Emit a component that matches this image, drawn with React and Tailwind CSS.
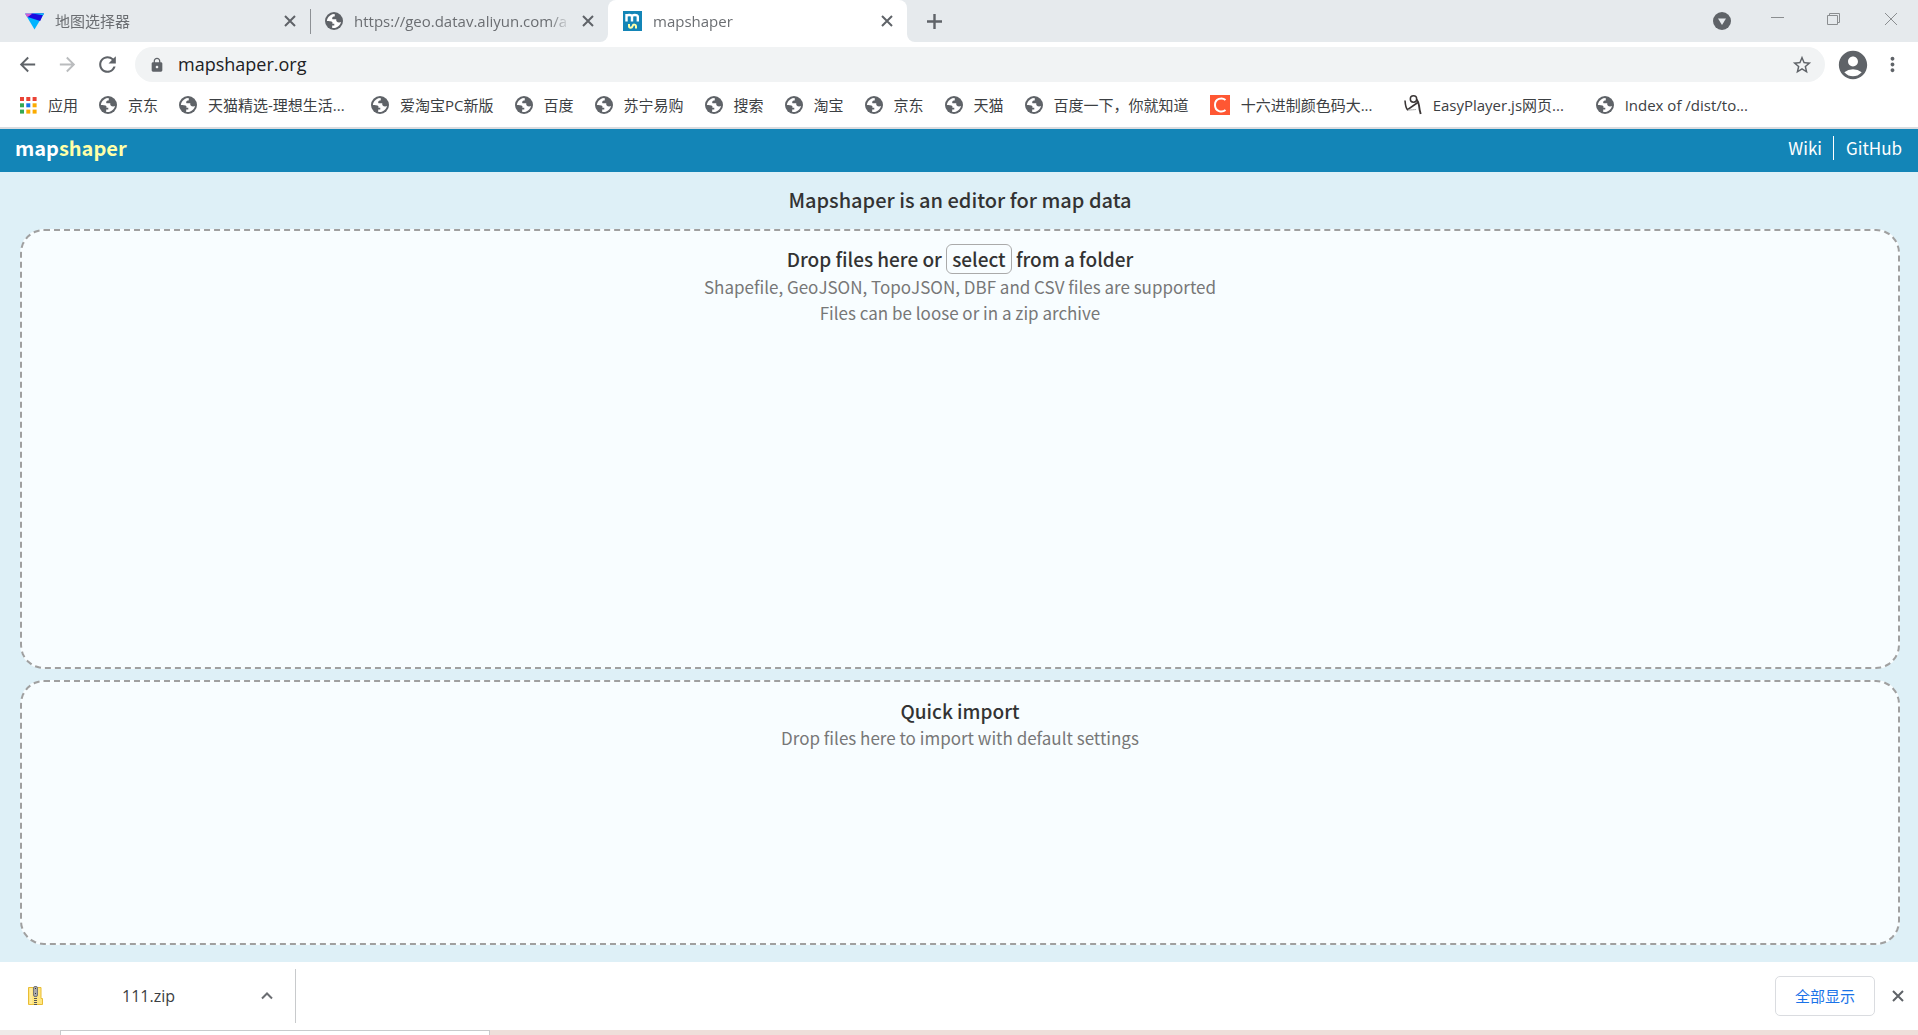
import React from 'react';
import { MdArrowBack, MdArrowForward, MdRefresh, MdLock, MdStarBorder, MdAccountCircle, MdMoreVert } from 'react-icons/md';

const ui = "font-['Open_Sans','Noto_Sans_CJK_SC',sans-serif]";
const web = "font-['Noto_Sans_CJK_SC',sans-serif]";

function Globe() {
  return (
    <svg viewBox="0 0 18 18" className="size-[18px] shrink-0" aria-hidden="true">
      <circle cx="9" cy="9" r="9" fill="#5f6368" />
      <path fill="#fff" d="M9.6 1.9C6.300 1.900 3.500 4 2.300 6.900c-.3.800-.4 1.500-.4 2.100 1.600-.2 3.200-.1 4.600.5 1 .4 1.300 1.400.8 2.300h2v1.700H7.200v2.400c1.200.3 2.400.3 3.600-.1 2.600-.8 4.600-3 5.200-5.700-1.500.6-3.400.5-4.300-.6-.5-.7-.6-1.600-.4-2.300H8.100C7.200 7.200 6.900 6.200 7.400 5.400c.4-.7 1.100-.8 1.800-.8.800 0 .7-1.500.4-2.700z" />
    </svg>
  );
}

function Cross() {
  return (
    <svg viewBox="0 0 18 18" className="size-[18px]" fill="none" stroke="currentColor" strokeWidth="2" aria-hidden="true">
      <path d="M4 4l10 10M14 4L4 14" />
    </svg>
  );
}

function Plus() {
  return (
    <svg viewBox="0 0 25 25" className="size-[25px]" fill="none" stroke="currentColor" strokeWidth="2.400" aria-hidden="true">
      <path d="M12.500 5v15M5 12.500h15" />
    </svg>
  );
}

function ChevronUp() {
  return (
    <svg viewBox="0 0 22 22" className="size-[22px]" fill="none" stroke="currentColor" strokeWidth="2" aria-hidden="true">
      <path d="M6 13.500l5-5 5 5" />
    </svg>
  );
}

function VeeLogo() {
  return (
    <svg viewBox="0 0 20 18" className="h-[18px] w-[19px] shrink-0" aria-hidden="true">
      <path d="M0 1h20L10 18z" fill="#00b4ff" />
      <path d="M2 4.500 16 9 19 2.500 20 1H7z" fill="#1a0ce0" />
      <path d="M0 1h8L2.500 5z" fill="#d35bd0" />
      <path d="M8 1h12l-1 2z" fill="#12c4f4" />
    </svg>
  );
}

function MapshaperLogo() {
  return (
    <svg viewBox="0 0 19 20" className="h-5 w-[19px] shrink-0" aria-hidden="true">
      <path d="M0 0h19v20H0z" fill="#1385b7" />
      <path d="M3.500 10.500V3M3.500 5.500c0-2 5.500-2 5.500 0v5M9 5.500c0-2 5.800-2 5.800 0v5" fill="none" stroke="#fff" strokeWidth="2.400" />
      <path d="M6 13v2c0 2.300 3 2.300 3.500.2s3.500-2.200 3.500.3v2" fill="none" stroke="#ffffa8" strokeWidth="2" />
    </svg>
  );
}

function Tab({ icon, title, active, width }) {
  return (
    <div className={`flex h-[42px] items-center ${width} ${active ? 'rounded-t-lg bg-white' : ''}`}>
      {icon}
      <span className="ml-[11px] mr-2 flex-1 overflow-hidden whitespace-nowrap text-[15px] leading-6 text-[#6b6e72] [mask-image:linear-gradient(to_right,black_90%,transparent)]">{title}</span>
      <button aria-label="Close tab" className="text-[#5f6368]"><Cross /></button>
    </div>
  );
}

const apps = ['#ea4335', '#ea4335', '#ea4335', '#34a853', '#1a73e8', '#fbab00', '#34a853', '#fbab00', '#fbab00'];

function AppsIcon() {
  return (
    <svg viewBox="0 0 17 17" className="size-[17px] shrink-0" aria-hidden="true">
      {apps.map((c, i) => <rect key={i} x={(i % 3) * 6.300} y={Math.floor(i / 3) * 6.300} width="4" height="4" fill={c} />)}
    </svg>
  );
}

function COrange() {
  return (
    <svg viewBox="0 0 20 20" className="size-5 shrink-0" aria-hidden="true">
      <path d="M0 0h20v20H0z" fill="#ff5733" />
      <path d="M15.500 5C12 2 5 3.500 5 10s7 8 10.500 5" fill="none" stroke="#fff" strokeWidth="2" />
    </svg>
  );
}

function PlayerIcon() {
  return (
    <svg viewBox="0 0 18 20" className="h-5 w-[18px] shrink-0" aria-hidden="true" fill="none" stroke="#3b3636">
      <circle cx="9.500" cy="4" r="3.200" strokeWidth="1.500" />
      <path d="M1 5.500c.3 4 .8 7.500 2.500 9.200L14.500 7" strokeWidth="1.600" />
      <path d="M12.700 4.500c1 1.500 2 3.500 2.300 6 .3 3 .8 5.500 1.700 8.500" strokeWidth="1.900" />
      <path d="M4 15c3 0 6-.3 8-.5" strokeWidth="1" stroke="#aaa" />
    </svg>
  );
}

const bookmarks = [
  [<AppsIcon />, '应用'], [<Globe />, '京东'], [<Globe />, '天猫精选-理想生活...', true], [<Globe />, '爱淘宝PC新版'],
  [<Globe />, '百度'], [<Globe />, '苏宁易购'], [<Globe />, '搜索'], [<Globe />, '淘宝'], [<Globe />, '京东'], [<Globe />, '天猫'],
  [<Globe />, '百度一下，你就知道'], [<COrange />, '十六进制颜色码大...', true], [<PlayerIcon />, 'EasyPlayer.js网页...', true], [<Globe />, 'Index of /dist/to...', true],
];

function DropZone({ className, children }) {
  return <section className={`rounded-3xl border-2 border-dashed border-[#a0a0a0] bg-[#f8fdff] text-center ${className}`}>{children}</section>;
}

export default function App() {
  return (
    <div className={`flex h-screen flex-col overflow-hidden bg-white ${ui}`}>
      <header>
        <div className="flex h-[42px] bg-white">
          <div className="flex items-center rounded-br-lg bg-[#e6eaed]">
            <Tab width="w-[310px] pl-[25px] pr-[11px]" icon={<VeeLogo />} title="地图选择器" />
            <span className="h-[25px] w-px bg-[#8d9195]" />
            <Tab width="w-[297px] pl-[14px] pr-[11px]" icon={<Globe />} title="https://geo.datav.aliyun.com/a" />
          </div>
          <div className="bg-[linear-gradient(#e6eaed_50%,white_50%)]">
            <Tab active width="w-[299px] pl-[15px] pr-[11px]" icon={<MapshaperLogo />} title="mapshaper" />
          </div>
          <div className="flex flex-1 items-center rounded-bl-lg bg-[#e6eaed] pl-[15px] pr-[20px]">
            <button aria-label="New tab" className="text-[#5f6368]"><Plus /></button>
            <button aria-label="Search tabs" className="ml-auto mr-[40px]">
              <svg viewBox="0 0 18 18" className="size-[18px]"><circle cx="9" cy="9" r="9" fill="#5f6368" /><path d="M5 6.500h8L9 13z" fill="#e6eaed" /></svg>
            </button>
            <svg viewBox="0 0 127 14" className="mb-[5px] h-[14px] w-[127px]" fill="none" stroke="#8b8e90">
              <path d="M0 5.500h13M56.500 3.500h10v9h-10zM58.500 3.500v-2h10v9h-2M114 1l12 12M126 1l-12 12" />
            </svg>
          </div>
        </div>
        <div className="flex h-[45px] items-center pl-[16px] pr-[14px] text-[#5f6368]">
          <button aria-label="Back"><MdArrowBack size={23} /></button>
          <button aria-label="Forward" className="ml-[17px] text-[#babcbe]"><MdArrowForward size={23} /></button>
          <button aria-label="Reload" className="ml-[16px]"><MdRefresh size={25} /></button>
          <div className="ml-[15px] flex h-[35px] flex-1 items-center rounded-full bg-[#f1f3f4] pl-[14px] pr-[12px]">
            <MdLock size={16} className="shrink-0" />
            <input aria-label="Address" defaultValue="mapshaper.org" className="ml-[13px] min-w-0 flex-1 bg-transparent pb-0.5 text-lg leading-6 text-[#202124] outline-none" />
            <button aria-label="Bookmark this page"><MdStarBorder size={22} /></button>
          </div>
          <button aria-label="Profile" className="ml-[11px]"><MdAccountCircle size={34} /></button>
          <button aria-label="Menu" className="ml-[11px]"><MdMoreVert size={23} /></button>
        </div>
        <nav className="flex h-[42px] items-center border-b-2 border-[#dadce0] pb-1 pl-5">
          {bookmarks.map(([icon, label, elided], i) => (
            <a key={i} href="#" className="mr-[21px] flex shrink-0 items-center gap-[11px] whitespace-nowrap text-[15px] leading-6 text-[#3c4043]">
              {icon}
              <span className={elided ? 'w-[142px]' : ''}>{label}</span>
            </a>
          ))}
        </nav>
      </header>

      <main className={`flex min-h-0 flex-1 flex-col bg-[#def0f7] ${web}`}>
        <div className="flex h-[43px] items-center justify-between bg-[#1385b7] pl-[15px] pr-4 pb-[6px] text-white">
          <a href="#" className="text-xl leading-6 font-bold">map<span className="text-[#ffffa8]">shaper</span></a>
          <nav className="flex items-center text-[17px] leading-6">
            <a href="#">Wiki</a>
            <a href="#" className="ml-[11px] border-l border-white pl-3">GitHub</a>
          </nav>
        </div>
        <div className="flex min-h-0 flex-1 flex-col pl-5 pr-[18px] pb-[17px] text-[#333]">
          <h1 className="pt-4 pb-[17px] text-center text-xl leading-6 font-medium">Mapshaper is an editor for map data</h1>
          <DropZone className="flex-[422] pt-[13px]">
            <h2 className="text-[19px] leading-[28px] font-medium">Drop files here or <button className="rounded-md border border-[#aaa] px-[5px]">select</button> from a folder</h2>
            <p className="text-[17px] leading-[26px] text-[#777]">Shapefile, GeoJSON, TopoJSON, DBF and CSV files are supported<br />Files can be loose or in a zip archive</p>
          </DropZone>
          <DropZone className="mt-[11px] flex-[246] pt-[15px]">
            <h2 className="text-[19px] leading-[28px] font-medium">Quick import</h2>
            <p className="text-[17px] leading-[26px] text-[#777]">Drop files here to import with default settings</p>
          </DropZone>
        </div>
      </main>

      <footer>
        <div className="flex h-[68px] items-center pr-[11px]">
          <div className="flex h-[54px] w-[296px] items-center border-r border-[#c8cacc] pl-[28px] pr-[17px]">
            <svg viewBox="0 0 15 20" className="h-5 w-[15px] shrink-0" aria-hidden="true">
              <path d="M.5 1.500h12.500v11h1.500v6H.5z" fill="#ffe680" stroke="#e8bc35" />
              <path d="M3 2v16" stroke="#fff2b8" />
              <path d="M7.500 10v10" stroke="#555" strokeWidth="3" strokeDasharray="1 1" />
              <rect x="5.500" y=".5" width="4" height="10" rx="1.500" fill="#aaa" stroke="#777" />
              <path d="M7 2h1v1H7zM7 7h1v1H7z" fill="#333" />
            </svg>
            <span className="ml-[79px] flex-1 text-base text-[#3c4043]">111.zip</span>
            <button aria-label="Download options" className="text-[#6b6e72]"><ChevronUp /></button>
          </div>
          <button className="ml-auto h-10 w-[100px] rounded-[5px] border border-[#dadce0] text-[15px] text-[#1a73e8]">全部显示</button>
          <button aria-label="Close downloads" className="ml-[14px] text-[#5f6368]"><Cross /></button>
        </div>
        <div className="flex h-[5px] bg-[#eedfda]">
          <div className="w-[60px] bg-[#efeae9]" />
          <div className="w-[430px] border border-b-0 border-[#c8cacc] bg-white" />
        </div>
      </footer>
    </div>
  );
}
